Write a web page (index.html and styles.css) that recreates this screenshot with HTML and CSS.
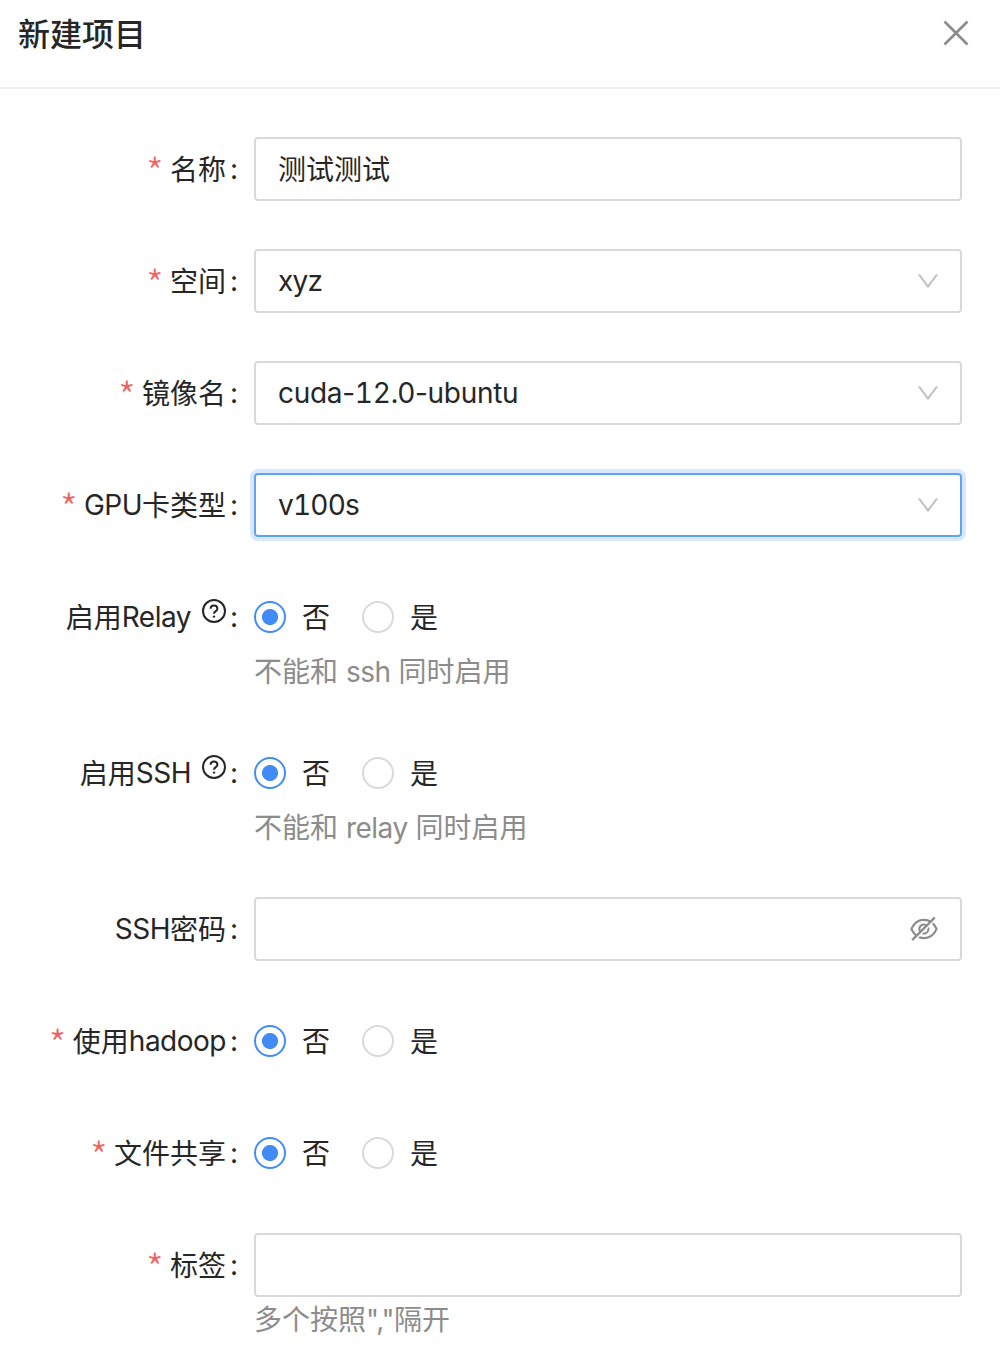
FILE: index.html
```html
<!DOCTYPE html>
<html lang="zh-CN">
<head>
<meta charset="utf-8">
<title>新建项目</title>
<link rel="stylesheet" href="styles.css">
</head>
<body>
<header class="header">
  <h1 class="title">新建项目</h1>
  <svg class="close" viewBox="0 0 26 26"><path d="M1.5 1.5l23 23M24.5 1.5l-23 23"/></svg>
</header>
<form class="form">
  <div class="row">
    <div class="label"><i class="star">*</i><span class="name">名称</span><b class="colon">:</b></div>
    <div class="control"><div class="box"><span class="value cjk">测试测试</span></div></div>
  </div>
  <div class="row">
    <div class="label"><i class="star">*</i><span class="name">空间</span><b class="colon">:</b></div>
    <div class="control"><div class="box"><span class="value xyz">xyz</span><svg class="arrow" viewBox="0 0 20 16"><path d="M1 1.5l9 12 9-12"/></svg></div></div>
  </div>
  <div class="row">
    <div class="label"><i class="star">*</i><span class="name">镜像名</span><b class="colon">:</b></div>
    <div class="control"><div class="box"><span class="value image">cuda-<span class="digits">12</span>.0-ubuntu</span><svg class="arrow" viewBox="0 0 20 16"><path d="M1 1.5l9 12 9-12"/></svg></div></div>
  </div>
  <div class="row">
    <div class="label"><i class="star">*</i><span class="name"><span class="latin">GPU</span>卡类型</span><b class="colon">:</b></div>
    <div class="control"><div class="box focused"><span class="value digits gpu">v100s</span><svg class="arrow" viewBox="0 0 20 16"><path d="M1 1.5l9 12 9-12"/></svg></div></div>
  </div>
  <div class="row hinted">
    <div class="label"><span class="name">启用<span class="latin">Relay</span></span><svg class="help" viewBox="0 0 26 26"><circle cx="13" cy="13" r="11"/><path d="M9.6 10.8c0-4.4 6.8-4.4 6.8 0 0 2.5-3.4 2.3-3.4 5"/><circle class="dot" cx="13" cy="18.6" r="1.2"/></svg><b class="colon">:</b></div>
    <div class="control"><div class="radios"><span class="radio on"></span><span class="option">否</span><span class="radio"></span><span class="option">是</span></div><p class="hint">不能和 <span class="latin">ssh</span> 同时启用</p></div>
  </div>
  <div class="row hinted">
    <div class="label"><span class="name">启用<span class="latin">SSH</span></span><svg class="help" viewBox="0 0 26 26"><circle cx="13" cy="13" r="11"/><path d="M9.6 10.8c0-4.4 6.8-4.4 6.8 0 0 2.5-3.4 2.3-3.4 5"/><circle class="dot" cx="13" cy="18.6" r="1.2"/></svg><b class="colon">:</b></div>
    <div class="control"><div class="radios"><span class="radio on"></span><span class="option">否</span><span class="radio"></span><span class="option">是</span></div><p class="hint">不能和 <span class="latin">relay</span> 同时启用</p></div>
  </div>
  <div class="row">
    <div class="label"><span class="name"><span class="latin">SSH</span>密码</span><b class="colon">:</b></div>
    <div class="control"><div class="box password"><span class="value"></span><svg class="eye" viewBox="0 0 1024 1024"><path d="M942.2 486.2Q889.47 375.11 816.7 305l-50.88 50.88C807.31 395.53 843.45 447.4 874.7 512 791.5 684.2 673.4 766 512 766q-72.67 0-133.87-22.38L323 798.75Q408 838 512 838q288.3 0 430.2-300.3a60.29 60.29 0 000-51.5zm-63.57-320.64L836 122.88a8 8 0 00-11.32 0L715.31 232.2Q624.86 186 512 186q-288.3 0-430.2 300.3a60.3 60.3 0 000 51.5q56.69 119.4 136.5 191.41L112.48 835a8 8 0 000 11.31L155.17 889a8 8 0 0011.31 0l712.15-712.12a8 8 0 000-11.32zM149.3 512C232.6 339.8 350.7 258 512 258c54.54 0 104.13 9.36 149.12 28.39l-70.3 70.3a176 176 0 00-238.13 238.13l-83.42 83.42C223.1 637.49 183.3 582.28 149.3 512zm246.7 0a112.11 112.11 0 01146.2-106.69L401.31 546.2A112 112 0 01396 512z"/><path d="M508 624c-3.46 0-6.87-.16-10.25-.47l-52.82 52.82a176.09 176.09 0 00227.42-227.42l-52.82 52.82c.31 3.38.47 6.79.47 10.25a111.94 111.94 0 01-112 112z"/></svg></div></div>
  </div>
  <div class="row">
    <div class="label"><i class="star">*</i><span class="name">使用<span class="latin">hadoop</span></span><b class="colon">:</b></div>
    <div class="control"><div class="radios"><span class="radio on"></span><span class="option">否</span><span class="radio"></span><span class="option">是</span></div></div>
  </div>
  <div class="row">
    <div class="label"><i class="star">*</i><span class="name">文件共享</span><b class="colon">:</b></div>
    <div class="control"><div class="radios"><span class="radio on"></span><span class="option">否</span><span class="radio"></span><span class="option">是</span></div></div>
  </div>
  <div class="row">
    <div class="label"><i class="star">*</i><span class="name">标签</span><b class="colon">:</b></div>
    <div class="control"><div class="box"></div><p class="hint">多个按照<span class="latin">","</span>隔开</p></div>
  </div>
</form>
</body>
</html>
```
FILE: styles.css
```css
* { box-sizing: border-box; }
body {
  margin: 0;
  height: 1346px;
  overflow: hidden;
  background: #fff;
  color: #262626;
  font: 28px/40px Inter, "Noto Sans CJK SC", sans-serif;
}
.header {
  display: flex;
  justify-content: space-between;
  align-items: flex-start;
  height: 89px;
  padding: 11px 31px 0 18px;
  border-bottom: 2px solid #f0f0f0;
}
.title { margin: 0; font-size: 32px; line-height: 48px; font-weight: 500; }
.close { width: 26px; height: 26px; margin-top: 9px; fill: none; stroke: #8c8c8c; stroke-width: 2.6; }
.form { padding: 48px 38px 0 0; }
.row { display: flex; height: 112px; }
.hinted { height: 156px; }
.label {
  display: flex;
  flex: none;
  width: 254px;
  height: 64px;
  padding-right: 16px;
  align-items: center;
  justify-content: flex-end;
}
.name, .cjk { padding-top: 2px; }
.latin { letter-spacing: -.5px; }
.name .latin { vertical-align: 1px; line-height: 1; }
.star {
  width: 16px;
  margin-right: 8px;
  padding-top: 4px;
  color: #f0605d;
  font: 300 40px/40px "Noto Sans CJK SC", sans-serif;
  text-align: center;
}
.colon { width: 8px; margin: 0 0 0 4px; font-weight: 400; text-align: center; }
.control { flex: 1; }
.box {
  display: flex;
  align-items: center;
  justify-content: space-between;
  height: 64px;
  padding: 0 22px;
  border: 2px solid #d9d9d9;
  border-radius: 4px;
}
.digits { font-variant-numeric: tabular-nums; }
.image { letter-spacing: -.3px; }
.gpu { letter-spacing: -.8px; }
.xyz { letter-spacing: -.7px; }
.focused { border-color: #5ba4fa; box-shadow: 0 0 0 4px #d9e8fe; }
.password { padding-right: 20px; }
.arrow { width: 20px; height: 16px; fill: none; stroke: #bfbfbf; stroke-width: 2; }
.eye { width: 32px; height: 32px; fill: #8c8c8c; }
.help { width: 26px; height: 26px; margin: -12px -1px 0 10px; fill: none; stroke: #262626; stroke-width: 2; }
.dot { fill: #262626; stroke: none; }
.radios { display: flex; align-items: center; height: 64px; }
.radio { width: 32px; height: 32px; border: 2px solid #d9d9d9; border-radius: 50%; }
.on { border-color: #418bf7; background: radial-gradient(circle, #418bf7 7.6px, transparent 8.4px); }
.option { width: 28px; margin: 0 32px 0 16px; padding-top: 2px; }
.hint { margin: 3px 0 0; color: #8c8c8c; }
```
